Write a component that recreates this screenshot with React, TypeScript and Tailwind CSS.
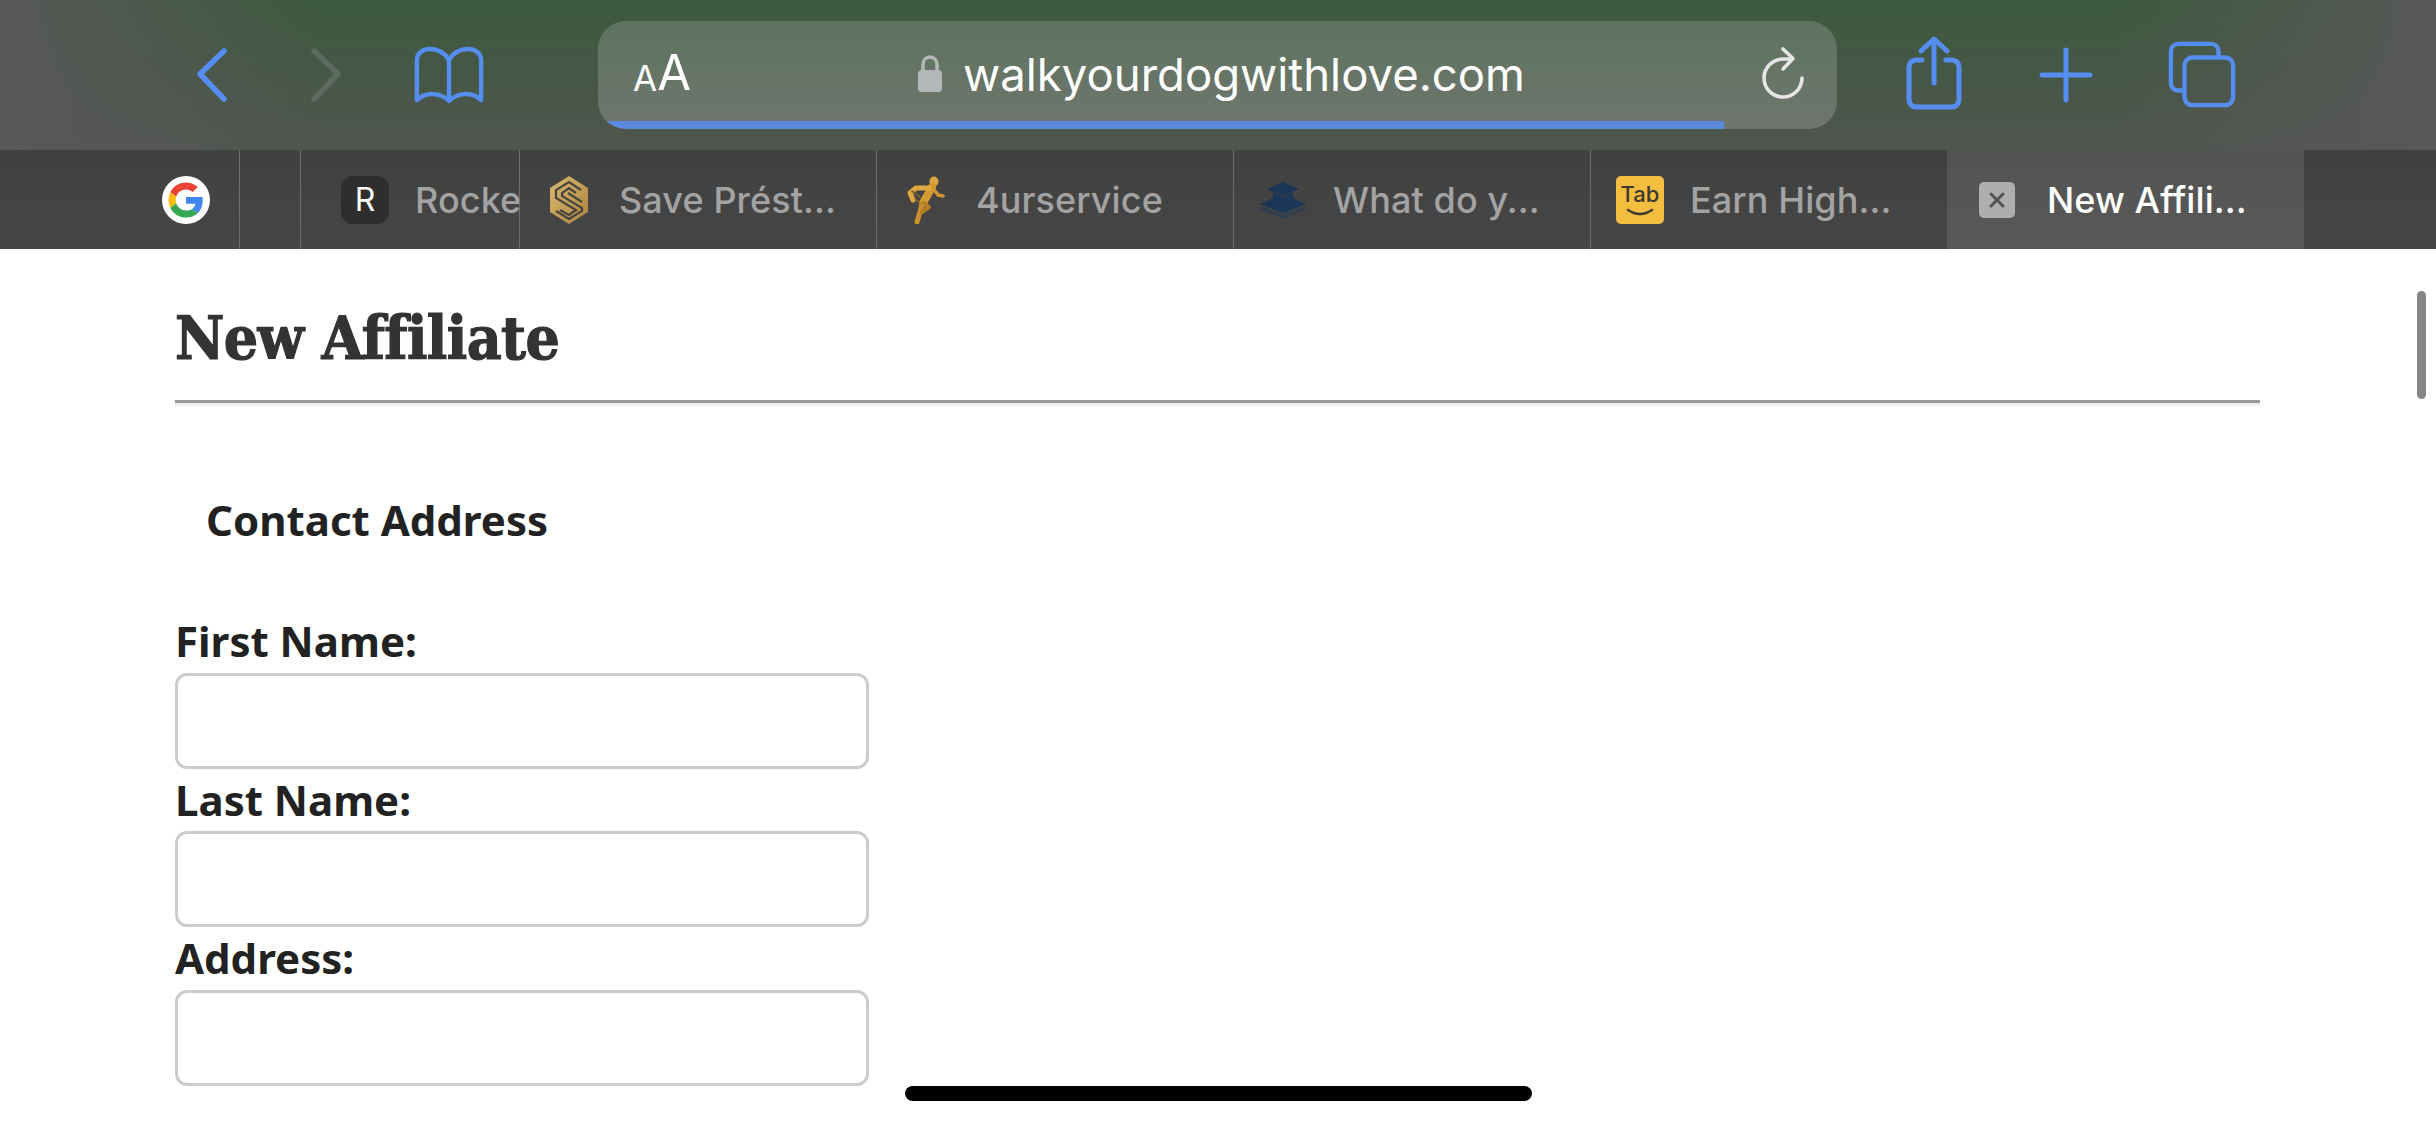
import React from "react";

const BLUE = "#558ef0";

function Tab({ w, pl = "pl-[25px]", icon, text, active = false, border = true }: { w: string; pl?: string; icon: React.ReactNode; text: string; active?: boolean; border?: boolean }) {
  return (
    <div className={`${w} ${pl} h-full shrink-0 flex items-center gap-[26px] overflow-hidden ${border ? "border-r border-[#6e6e6e]" : ""} ${active ? "bg-gradient-to-b from-[#525452] to-[#585858]" : ""}`}>
      <div className="w-[48px] h-[48px] shrink-0 flex items-center justify-center">{icon}</div>
      <span className={`text-[36px] leading-none font-medium whitespace-nowrap tracking-[0.1px] ${active ? "text-white" : "text-[#a3a3a3]"}`}>{text}</span>
    </div>
  );
}

function GoogleIcon() {
  return (
    <svg width="48" height="48" viewBox="0 0 48 48">
      <circle cx="24" cy="24" r="24" fill="#fff" />
      <g transform="translate(6.5 6.5) scale(0.73)">
        <path fill="#EA4335" d="M24 9.5c3.54 0 6.71 1.22 9.21 3.6l6.85-6.85C35.9 2.38 30.47 0 24 0 14.62 0 6.51 5.38 2.56 13.22l7.98 6.19C12.43 13.72 17.74 9.5 24 9.5z" />
        <path fill="#4285F4" d="M46.98 24.55c0-1.57-.15-3.09-.38-4.55H24v9.02h12.94c-.58 2.96-2.26 5.48-4.78 7.18l7.73 6c4.51-4.18 7.09-10.36 7.09-17.65z" />
        <path fill="#FBBC05" d="M10.53 28.59c-.48-1.45-.76-2.99-.76-4.59s.27-3.14.76-4.59l-7.98-6.19C.92 16.46 0 20.12 0 24c0 3.88.92 7.54 2.56 10.78l7.97-6.19z" />
        <path fill="#34A853" d="M24 48c6.48 0 11.93-2.13 16.08-5.81l-7.73-6c-2.15 1.45-4.92 2.3-8.35 2.3-6.26 0-11.57-4.22-13.47-9.91l-7.98 6.19C6.51 42.62 14.62 48 24 48z" />
      </g>
    </svg>
  );
}

function HexIcon() {
  return (
    <svg width="38" height="48" viewBox="0 0 38 48">
      <defs>
        <linearGradient id="hexg" x1="0" y1="0" x2="1" y2="1">
          <stop offset="0" stopColor="#dcb96f" />
          <stop offset="1" stopColor="#a9843f" />
        </linearGradient>
      </defs>
      <polygon points="19,0 38,12 38,36 19,48 0,36 0,12" fill="url(#hexg)" />
      <g fill="none" stroke="#46443f" strokeWidth="2.2" strokeLinejoin="miter">
        <polyline points="31,14 19,6 6,14 6,22 26,34 19,39 10,34" />
        <polyline points="26,17 19,12 12,17 12,20 32,32 32,35 19,43 6,35" />
        <polyline points="32,26 18,17" />
      </g>
    </svg>
  );
}

function RunnerIcon() {
  return (
    <svg width="38" height="48" viewBox="0 0 38 48">
      <ellipse cx="27" cy="5.5" rx="4.5" ry="5" fill="#d9a441" />
      <g fill="none" strokeLinecap="round" strokeLinejoin="round">
        <path d="M25 11 L20 20 L16 27" stroke="#d39a33" strokeWidth="8" />
        <path d="M15 28 L13 36 L10 46" stroke="#c98f2c" strokeWidth="5" />
        <path d="M17 27 L22 31 L15 36" stroke="#b57d24" strokeWidth="4" />
        <path d="M26 12 L31 19 L36 20" stroke="#cf9734" strokeWidth="3.5" />
        <path d="M22 12 L9 12 L3 17 L6 24" stroke="#e0a93f" strokeWidth="5" />
        <path d="M5 15 L13 21" stroke="#7d6231" strokeWidth="1.6" />
        <path d="M8 23 L13 27" stroke="#8d6a2e" strokeWidth="1.6" />
      </g>
    </svg>
  );
}

function StackIcon() {
  return (
    <svg width="48" height="36" viewBox="0 0 48 36">
      <polygon points="24,0 40,7 24,14 8,7" fill="#1b3656" />
      <path d="M14 10 L14 16 L1 22 L24 31 L47 22 L34 16 L34 10 L24 15 Z" fill="#1b3656" />
      <path d="M2 26 L24 35 L46 26" fill="none" stroke="#243c58" strokeWidth="3.5" strokeDasharray="2 1.5" />
    </svg>
  );
}

function TabIcon() {
  return (
    <div className="w-[48px] h-[48px] rounded-[5px] bg-[#f5bd3e] flex flex-col items-center pt-[7px]">
      <span className="text-[#3a3a33] text-[22px] leading-[22px] font-medium font-['Inter',sans-serif]">Tab</span>
      <svg width="28" height="9" viewBox="0 0 28 9" className="mt-[3px]">
        <path d="M2 2 Q14 10 26 2" fill="none" stroke="#3a3a33" strokeWidth="2.5" strokeLinecap="round" />
      </svg>
    </div>
  );
}

function XIcon() {
  return (
    <div className="w-[36px] h-[36px] rounded-[5px] bg-[#adafae] flex items-center justify-center">
      <svg width="18" height="18" viewBox="0 0 18 18">
        <path d="M3 3 L15 15 M15 3 L3 15" stroke="#525252" strokeWidth="3" strokeLinecap="round" />
      </svg>
    </div>
  );
}

function Field({ label }: { label: string }) {
  return (
    <div>
      <div className="h-[62.5px] leading-[62px] text-[42px] font-bold text-[#222]">{label}</div>
      <input className="block w-[694px] h-[96px] border-[3px] border-[#cccccc] rounded-[12px] bg-white" />
    </div>
  );
}

export default function App() {
  return (
    <div className="relative w-[2436px] h-[1125px] overflow-hidden bg-white flex flex-col font-['Inter',sans-serif]">
      <header className="h-[150px] shrink-0 flex items-start bg-[linear-gradient(to_right,#585858,transparent_320px,transparent_2116px,#585858),linear-gradient(to_bottom,#3c5a3e,#50554f)]">
        <svg width="34" height="56" viewBox="0 0 34 56" className="ml-[194px] mt-[47px]" fill="none" stroke={BLUE} strokeWidth="5.5" strokeLinecap="round" strokeLinejoin="round">
          <path d="M30 4 L6 27 L30 52" />
        </svg>
        <svg width="34" height="56" viewBox="0 0 34 56" className="ml-[82px] mt-[47px]" fill="none" stroke="#5d6a60" strokeWidth="5.5" strokeLinecap="round" strokeLinejoin="round">
          <path d="M4 4 L28 27 L4 52" />
        </svg>
        <svg width="70" height="58" viewBox="0 0 72 58" preserveAspectRatio="none" className="ml-[70px] mt-[46px]" fill="none" stroke={BLUE} strokeWidth="4.5" strokeLinecap="round" strokeLinejoin="round">
          <path d="M36 14 C31 6 24 3 16 3 C8 3 3 8 3 14 L3 54 C12 46 27 46 36 55 C45 46 60 46 69 54 L69 14 C69 8 64 3 56 3 C48 3 41 6 36 14 Z" />
          <path d="M36 14 L36 54" />
        </svg>
        <div className="relative ml-[114px] mt-[21px] w-[1239px] h-[108px] shrink-0 rounded-[28px] overflow-hidden bg-gradient-to-b from-white/[0.16] to-white/[0.19] flex items-center pl-[35px] pr-[26px]">
          <div className="w-[60px] h-[44px] mt-[-3px] flex items-end text-white leading-none">
            <span className="text-[35px] leading-[36px]">A</span>
            <span className="text-[49px] leading-[46px]">A</span>
          </div>
          <div className="flex items-center ml-[224px] mt-[-3px]">
            <svg width="26" height="37" viewBox="0 0 26 37">
              <path d="M6 17 L6 10 C6 5 9 2 13 2 C17 2 20 5 20 10 L20 17" fill="none" stroke="#b4b8b8" strokeWidth="3.5" />
              <rect x="1" y="15" width="24" height="22" rx="4" fill="#b4b8b8" />
            </svg>
            <span className="ml-[20px] mt-[2px] text-[45.5px] leading-none text-white">walkyourdogwithlove.com</span>
          </div>
          <svg width="50" height="56" viewBox="0 0 50 56" className="absolute left-[1162px] top-[24px]" fill="none" stroke="#e6e6e6" strokeWidth="3.6" strokeLinecap="round" strokeLinejoin="round">
            <path d="M42 33 A19 19 0 1 1 23 14 H32" />
            <path d="M23 4 L33 13.5 L23 24" />
          </svg>
          <div className="absolute left-0 bottom-0 w-[1126px] h-[8px] bg-[#5a8ae0]" />
        </div>
        <svg width="60" height="74" viewBox="0 0 60 74" className="ml-[67px] mt-[36px]" fill="none" stroke={BLUE} strokeWidth="5" strokeLinecap="round" strokeLinejoin="round">
          <path d="M18 24 H13 C8 24 5 27 5 32 L5 63 C5 68 8 71 13 71 H47 C52 71 55 68 55 63 L55 32 C55 27 52 24 47 24 H42" />
          <path d="M30 47 V4" />
          <path d="M17 15 L30 3 L43 15" />
        </svg>
        <svg width="54" height="56" viewBox="0 0 54 56" className="ml-[75px] mt-[47px]" fill="none" stroke={BLUE} strokeWidth="5" strokeLinecap="round">
          <path d="M27 3 V53 M3 28 H51" />
        </svg>
        <svg width="68" height="68" viewBox="0 0 70 70" className="ml-[75px] mt-[41px]" fill="none" stroke={BLUE} strokeWidth="4.5" strokeLinejoin="round">
          <path d="M15 51 H11 C6 51 3 48 3 43 L3 11 C3 6 6 3 11 3 H44 C49 3 52 6 52 11 L52 17" />
          <rect x="17" y="17" width="50" height="49" rx="8" />
        </svg>
      </header>

      <nav className="h-[99px] shrink-0 flex bg-gradient-to-b from-[#3f413f] to-[#464646]">
        <div className="w-[240px] h-full shrink-0 border-r border-[#6e6e6e] flex items-center justify-end pr-[29px]">
          <GoogleIcon />
        </div>
        <div className="w-[61px] h-full shrink-0 border-r border-[#6e6e6e]" />
        <Tab
          w="w-[219px]"
          pl="pl-[40px]"
          icon={<div className="w-[48px] h-[48px] rounded-[12px] bg-[#2e2e2e] flex items-center justify-center text-white text-[32px] leading-none">R</div>}
          text="Rocke"
        />
        <Tab w="w-[357px]" icon={<HexIcon />} text="Save Prést..." />
        <Tab w="w-[357px]" icon={<RunnerIcon />} text="4urservice" />
        <Tab w="w-[357px]" icon={<StackIcon />} text="What do y..." />
        <Tab w="w-[356px]" icon={<TabIcon />} text="Earn High..." border={false} />
        <Tab w="w-[357px]" pl="pl-[26px]" icon={<XIcon />} text="New Affili..." active border={false} />
      </nav>

      <main className="pl-[175px] w-[2260px] font-['Noto_Sans',sans-serif]">
        <h1 className="h-[151px] pt-[53px] text-[60px] leading-[72px] font-bold text-[#333] tracking-[-0.6px] [-webkit-text-stroke:1.2px_#333] font-['DejaVu_Serif_Condensed','DejaVu_Serif',serif]">New Affiliate</h1>
        <hr className="border-0 border-t-[3px] border-b-[3px] border-t-[#999999] border-b-[#eeeeee] h-[6px]" />
        <h2 className="pl-[31px] pt-[86px] h-[206px] text-[42px] leading-[56px] font-bold text-[#222]">Contact Address</h2>
        <div className="mt-[-2px]">
          <Field label="First Name:" />
          <Field label="Last Name:" />
          <Field label="Address:" />
        </div>
      </main>

      <div className="absolute left-[2417px] top-[291px] w-[9px] h-[108px] rounded-full bg-[#868686]" />
      <div className="absolute left-[905px] top-[1086px] w-[627px] h-[15px] rounded-full bg-black" />
    </div>
  );
}
